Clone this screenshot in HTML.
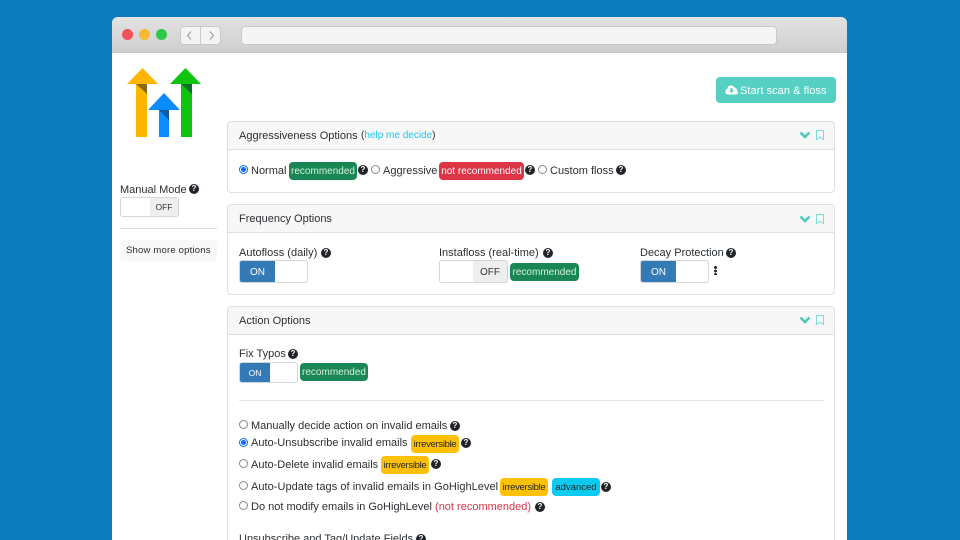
<!DOCTYPE html>
<html><head><meta charset="utf-8">
<style>
*{box-sizing:border-box}
html,body{margin:0;padding:0;width:960px;height:540px;overflow:hidden;background:#0c7cbf;font-family:"Liberation Sans",sans-serif;color:#212529}
.a{position:absolute}
.t{position:absolute;font-size:11px;line-height:14px;white-space:nowrap;letter-spacing:0;color:#2b2f33}
.card{position:absolute;left:115px;width:608px;background:#fff;border:1px solid #dfdfdf;border-radius:4px;overflow:hidden}
.hd{position:absolute;left:0;top:0;right:0;height:28px;background:#f7f7f7;border-bottom:1px solid #dfdfdf}
.q{position:absolute;width:10px;height:10px;margin:0 0 0 -1px;border-radius:50%;background:#212529;color:#fff;font:bold 8px/10px "Liberation Sans",sans-serif;text-align:center}
.b{position:absolute;border-radius:4px;font-size:10px;line-height:19px;height:18px;text-align:center;white-space:nowrap;color:#fff}
.g{background:#198754;color:#d8efe3}
.r{background:#dc3545}
.y{background:#ffc107;color:#212529;letter-spacing:-.3px;font-size:9.500px}
.c{background:#0dcaf0;color:#212529;font-size:9.500px}
.rd{position:absolute;width:9px;height:9px;border:1px solid #8a8a8a;border-radius:50%;background:#fff}
.rd.on{border:1px solid #0d6efd}
.rd.on:after{content:"";position:absolute;left:1px;top:1px;width:5px;height:5px;border-radius:50%;background:#0d6efd}
.tg{position:absolute;border:1px solid #d5d5d5;border-radius:3px;background:#fff;overflow:hidden}
.on,.off{position:absolute;top:0;bottom:0;text-align:center;font-size:9.5px}
.tg .on{background:#337ab7;color:#fff;left:0;border:0;border-radius:0}
.tg .off{background:#eee;color:#333;right:0}
</style></head>
<body>
<div class="a" style="left:112px;top:17px;width:735px;height:523px;background:#fff;border-radius:6px 6px 0 0;overflow:hidden;filter:blur(.3px)">
  <div class="a" style="left:0;top:0;width:735px;height:36px;background:linear-gradient(#e2e2e2,#cfcfcf);border-bottom:1px solid #c4c4c4"></div>
  <div class="a" style="left:10px;top:12px;width:11px;height:11px;border-radius:50%;background:#f4515a"></div>
  <div class="a" style="left:27px;top:12px;width:11px;height:11px;border-radius:50%;background:#f9b932"></div>
  <div class="a" style="left:44px;top:12px;width:11px;height:11px;border-radius:50%;background:#2cc84a"></div>
  <div class="a" style="left:68px;top:9px;width:21px;height:19px;background:#f4f4f4;border:1px solid #c9c9c9;border-radius:4px 0 0 4px"></div>
  <div class="a" style="left:88px;top:9px;width:21px;height:19px;background:#f4f4f4;border:1px solid #c9c9c9;border-radius:0 4px 4px 0"></div>
  <svg class="a" style="left:68px;top:9px" width="42" height="19"><path d="M11 5.500 7.500 9.500 11 13.500M30 5.500 33.500 9.500 30 13.500" fill="none" stroke="#999" stroke-width="1"/></svg>
  <div class="a" style="left:129px;top:9px;width:536px;height:19px;background:#f5f5f5;border:1px solid #c9c9c9;border-radius:4px"></div>

  <svg class="a" style="left:13px;top:50px" width="78" height="74">
    <path d="M17.500 1 2 17H11V70H22V17H33Z" fill="#ffb600"/>
    <path d="M11 17H22V27Z" fill="#8a6a10"/>
    <path d="M39 26 23 43H34V70H44V43H55Z" fill="#0a8cff"/>
    <path d="M34 43H44V53Z" fill="#0c5c9c"/>
    <path d="M60.500 1 45 17H56V70H67V17H76Z" fill="#0cc40c"/>
    <path d="M56 17H67V27Z" fill="#0a6f2a"/>
  </svg>

  <div class="t" style="left:8px;top:166px">Manual Mode</div>
  <div class="q" style="left:78px;top:167px">?</div>
  <div class="tg" style="left:8px;top:180px;width:59px;height:20px"><div class="off" style="width:28px;line-height:19px;font-size:8.5px">OFF</div></div>
  <div class="a" style="left:8px;top:211px;width:97px;height:1px;background:#ddd"></div>
  <div class="a" style="left:8px;top:223px;width:97px;height:21px;background:#f8f8f8;border-radius:3px"></div>
  <div class="t" style="left:14px;top:227px;font-size:9.5px;letter-spacing:.2px">Show more options</div>

  <div class="a" style="left:604px;top:60px;width:120px;height:26px;background:#56d0c3;border-radius:4px"></div>
  <svg class="a" style="left:613px;top:67px" width="13" height="11"><path d="M3 10.500a3 3 0 0 1-.6-5.800 3.500 3.500 0 0 1 6.600-1.400 3 3 0 0 1 3 3.200 2.200 2.200 0 0 1-1 4Z" fill="#fff"/><path d="M5.500 4h2v2.500H9L6.500 9 4 6.500h1.500Z" fill="#56d0c3"/></svg>
  <div class="t" style="left:628px;top:67px;color:#fff;font-size:11px;letter-spacing:.05px">Start scan &amp; floss</div>

  <!-- Card 1 -->
  <div class="card" style="top:104px;height:72px"><div class="hd"></div></div>
  <div class="t" style="left:127px;top:112px">Aggressiveness Options</div>
  <div class="t" style="left:249px;top:112px;font-size:10px">(<span style="color:#1cc8f0">help me decide</span>)</div>
  <div class="rd on" style="left:127px;top:148px"></div>
  <div class="t" style="left:139px;top:147px">Normal</div>
  <div class="b g" style="left:177px;top:145px;width:68px">recommended</div>
  <div class="q" style="left:247px;top:148px">?</div>
  <div class="rd" style="left:259px;top:148px"></div>
  <div class="t" style="left:271px;top:147px">Aggressive</div>
  <div class="b r" style="left:327px;top:145px;width:85px">not recommended</div>
  <div class="q" style="left:414px;top:148px">?</div>
  <div class="rd" style="left:426px;top:148px"></div>
  <div class="t" style="left:438px;top:147px">Custom floss</div>
  <div class="q" style="left:505px;top:148px">?</div>

  <!-- Card 2 -->
  <div class="card" style="top:187px;height:91px"><div class="hd"></div></div>
  <div class="t" style="left:127px;top:195px">Frequency Options</div>
  <div class="t" style="left:127px;top:229px">Autofloss (daily)</div>
  <div class="q" style="left:210px;top:231px">?</div>
  <div class="tg" style="left:127px;top:243px;width:69px;height:23px"><div class="on" style="width:35px;line-height:24px;font-size:10px">ON</div></div>
  <div class="t" style="left:327px;top:229px">Instafloss (real-time)</div>
  <div class="q" style="left:432px;top:231px">?</div>
  <div class="tg" style="left:327px;top:243px;width:69px;height:23px"><div class="off" style="width:34px;line-height:23px;font-size:10px">OFF</div></div>
  <div class="b g" style="left:398px;top:246px;width:69px">recommended</div>
  <div class="t" style="left:528px;top:229px">Decay Protection</div>
  <div class="q" style="left:615px;top:231px">?</div>
  <div class="tg" style="left:528px;top:243px;width:69px;height:23px"><div class="on" style="width:35px;line-height:24px;font-size:10px">ON</div></div>
  <div class="a" style="left:602px;top:249px;width:3px;height:9px;background:radial-gradient(circle at 1.500px 1.500px,#212529 1.400px,transparent 1.500px) 0 0/3px 3.500px"></div>

  <!-- Card 3 -->
  <div class="card" style="top:289px;height:260px"><div class="hd"></div></div>
  <div class="t" style="left:127px;top:297px">Action Options</div>
  <div class="t" style="left:127px;top:330px">Fix Typos</div>
  <div class="q" style="left:177px;top:332px">?</div>
  <div class="tg" style="left:127px;top:345px;width:59px;height:21px"><div class="on" style="width:30px;line-height:20px;font-size:8.500px">ON</div></div>
  <div class="b g" style="left:188px;top:346px;width:68px">recommended</div>
  <div class="a" style="left:127px;top:383px;width:585px;height:1px;background:#e4e4e4"></div>

  <div class="rd" style="left:127px;top:403px"></div>
  <div class="t" style="left:139px;top:402px">Manually decide action on invalid emails</div>
  <div class="q" style="left:339px;top:404px">?</div>
  <div class="rd on" style="left:127px;top:421px"></div>
  <div class="t" style="left:139px;top:419px">Auto-Unsubscribe invalid emails</div>
  <div class="b y" style="left:299px;top:418px;width:48px">irreversible</div>
  <div class="q" style="left:350px;top:421px">?</div>
  <div class="rd" style="left:127px;top:442px"></div>
  <div class="t" style="left:139px;top:441px">Auto-Delete invalid emails</div>
  <div class="b y" style="left:269px;top:439px;width:48px">irreversible</div>
  <div class="q" style="left:320px;top:442px">?</div>
  <div class="rd" style="left:127px;top:464px"></div>
  <div class="t" style="left:139px;top:463px;letter-spacing:.04px">Auto-Update tags of invalid emails in GoHighLevel</div>
  <div class="b y" style="left:388px;top:461px;width:48px">irreversible</div>
  <div class="b c" style="left:440px;top:461px;width:48px">advanced</div>
  <div class="q" style="left:490px;top:465px">?</div>
  <div class="rd" style="left:127px;top:484px"></div>
  <div class="t" style="left:139px;top:483px">Do not modify emails in GoHighLevel <span style="color:#dc3545">(not recommended)</span></div>
  <div class="q" style="left:424px;top:485px">?</div>
  <div class="t" style="left:127px;top:515px">Unsubscribe and Tag/Update Fields</div>
  <div class="q" style="left:305px;top:517px">?</div>

  <svg class="a" style="left:687px;top:112px" width="30" height="12"><path d="M1.500 3.500 6 8 10.500 3.500" fill="none" stroke="#4fc9bb" stroke-width="2.600"/><path d="M17.500 1.500H24.500V10.500L21 8 17.500 10.500Z" fill="none" stroke="#7fdcd2" stroke-width="1"/></svg>
  <svg class="a" style="left:687px;top:196px" width="30" height="12"><path d="M1.500 3.500 6 8 10.500 3.500" fill="none" stroke="#4fc9bb" stroke-width="2.600"/><path d="M17.500 1.500H24.500V10.500L21 8 17.500 10.500Z" fill="none" stroke="#7fdcd2" stroke-width="1"/></svg>
  <svg class="a" style="left:687px;top:297px" width="30" height="12"><path d="M1.500 3.500 6 8 10.500 3.500" fill="none" stroke="#4fc9bb" stroke-width="2.600"/><path d="M17.500 1.500H24.500V10.500L21 8 17.500 10.500Z" fill="none" stroke="#7fdcd2" stroke-width="1"/></svg>
</div>
</body></html>
